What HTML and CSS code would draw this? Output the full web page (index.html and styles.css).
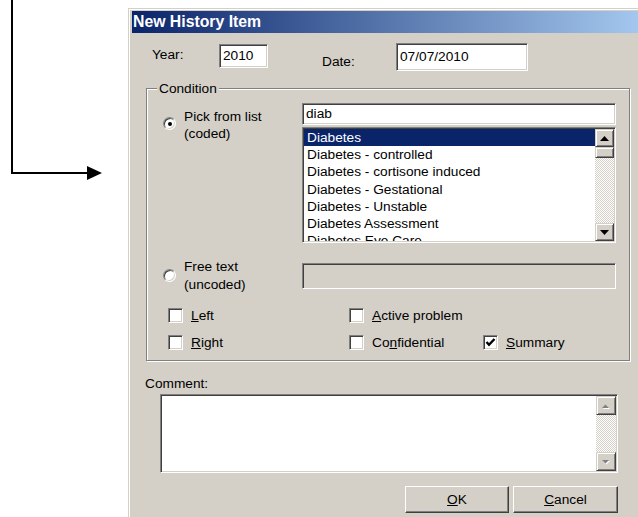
FILE: index.html
```html
<!DOCTYPE html>
<html>
<head>
<meta charset="utf-8">
<title>New History Item</title>
<link rel="stylesheet" href="styles.css">
</head>
<body>
<div class="scene">
  <svg class="pointer" viewBox="0 0 128 517" width="128" height="517">
    <path d="M12 0V173H88" stroke="#000" stroke-width="2" fill="none"/>
    <polygon points="87,166 102,173 87,180" fill="#000"/>
  </svg>

  <div class="window">
    <div class="titlebar">New History Item</div>

    <div class="top-row">
      <div class="lbl lbl-year">Year:</div>
      <div class="field in-year">2010</div>
      <div class="lbl lbl-date">Date:</div>
      <div class="field in-date">07/07/2010</div>
    </div>

    <div class="group">
      <span class="legend">Condition</span>

      <div class="opt-row">
        <div class="opt">
          <span class="radio checked"></span>
          <div class="opt-label">Pick from list<br>(coded)</div>
        </div>
        <div class="pick">
          <div class="field search">diab</div>
          <div class="field listbox">
            <div class="items">
              <div class="item sel">Diabetes</div>
              <div class="item">Diabetes - controlled</div>
              <div class="item">Diabetes - cortisone induced</div>
              <div class="item">Diabetes - Gestational</div>
              <div class="item">Diabetes - Unstable</div>
              <div class="item">Diabetes Assessment</div>
              <div class="item">Diabetes Eye Care</div>
            </div>
            <div class="vscroll">
              <div class="sbtn"><svg width="9" height="5" viewBox="0 0 9 5"><polygon points="0,5 9,5 4.5,0" fill="#000"/></svg></div>
              <div class="sbtn thumb"></div>
              <div class="track"></div>
              <div class="sbtn"><svg width="9" height="5" viewBox="0 0 9 5"><polygon points="0,0 9,0 4.5,5" fill="#000"/></svg></div>
            </div>
          </div>
        </div>
      </div>

      <div class="opt-row free">
        <div class="opt">
          <span class="radio"></span>
          <div class="opt-label">Free text<br>(uncoded)</div>
        </div>
        <div class="field free-text"></div>
      </div>

      <div class="checks">
        <div class="check"><span class="box"></span><u>L</u>eft</div>
        <div class="check"><span class="box"></span><u>A</u>ctive problem</div>
        <div class="check"></div>
        <div class="check"><span class="box"></span><u>R</u>ight</div>
        <div class="check"><span class="box"></span>Co<u>n</u>fidential</div>
        <div class="check"><span class="box"><svg width="13" height="13" viewBox="0 0 13 13"><polyline points="2.5,6 5,8.8 10.5,3" fill="none" stroke="#000" stroke-width="2.4"/></svg></span><u>S</u>ummary</div>
      </div>
    </div>

    <div class="lbl comment-lbl">Comment:</div>
    <div class="field comment">
      <div class="vscroll wide">
        <div class="sbtn tall"><svg width="10" height="6" viewBox="0 0 10 6"><polygon points="1,5 8,5 4.5,1.5" fill="#fff" transform="translate(1,1)"/><polygon points="1,5 8,5 4.5,1.5" fill="#808080"/></svg></div>
        <div class="track"></div>
        <div class="sbtn tall"><svg width="10" height="6" viewBox="0 0 10 6"><polygon points="1,1 8,1 4.5,4.5" fill="#fff" transform="translate(1,1)"/><polygon points="1,1 8,1 4.5,4.5" fill="#808080"/></svg></div>
      </div>
    </div>

    <div class="buttons">
      <div class="btn"><u>O</u>K</div>
      <div class="btn cancel"><u>C</u>ancel</div>
    </div>
  </div>
</div>
</body>
</html>
```

FILE: styles.css
```css
* { box-sizing: border-box; }

html, body { margin: 0; }

body {
  width: 638px;
  height: 517px;
  overflow: hidden;
  background: #fff;
  font-family: "Liberation Sans", Arial, sans-serif;
  font-size: 13.7px;
  color: #000;
}

.scene {
  display: flex;
  align-items: flex-start;
}

.pointer {
  flex: none;
  display: block;
}

/* classic dialog window */
.window {
  flex: none;
  width: 520px;
  height: 520px;
  margin-top: 8px;
  padding: 3px 0 0 4px;
  background: #D4D0C8;
  box-shadow: inset 1px 1px 0 #D4D0C8, inset 2px 2px 0 #fff;
}

.titlebar {
  height: 22px;
  padding-left: 1px;
  background: linear-gradient(90deg, #0A246A, #A6CAF0);
  color: #fff;
  font-weight: bold;
  font-size: 15.8px;
  line-height: 22px;
  white-space: nowrap;
}

.lbl { line-height: 16px; white-space: nowrap; }

/* sunken edit field */
.field {
  background: #fff;
  border: 1px solid;
  border-color: #808080 #fff #fff #808080;
  box-shadow: inset 1px 1px 0 #404040, inset -1px -1px 0 #D4D0C8;
  padding: 0 3px;
  white-space: nowrap;
  overflow: hidden;
}

.top-row {
  display: flex;
  align-items: flex-start;
  margin-top: 10px;
  padding-left: 20px;
}

.lbl-year { width: 67px; margin-top: 4px; }

.in-year {
  width: 49px;
  height: 24px;
  margin-top: 1px;
  line-height: 22px;
}

.lbl-date { width: 74px; margin: 11px 0 0 54px; }

.in-date {
  width: 132px;
  height: 28px;
  line-height: 26px;
}

/* etched group box */
.group {
  position: relative;
  width: 484px;
  height: 273px;
  margin: 17px 0 0 14px;
  padding: 14px 0 0 16px;
  border: 1px solid #808080;
  box-shadow: inset 1px 1px 0 #fff, 1px 1px 0 #fff;
}

.legend {
  position: absolute;
  top: -9px;
  left: 10px;
  padding: 0 2px;
  background: #D4D0C8;
  line-height: 17px;
}

.opt-row {
  display: flex;
  align-items: flex-start;
}

.opt {
  flex: none;
  width: 139px;
  display: flex;
  align-items: flex-start;
}

.radio {
  flex: none;
  position: relative;
  width: 13px;
  height: 13px;
  margin-top: 14px;
  border-radius: 50%;
  background: #fff;
  border: 1px solid;
  border-color: #808080 #fff #fff #808080;
  box-shadow: inset 1px 1px 0 #404040, inset -1px -1px 0 #D4D0C8;
}

.radio.checked::after {
  content: "";
  position: absolute;
  left: 3.5px;
  top: 3.5px;
  width: 4px;
  height: 4px;
  border-radius: 50%;
  background: #000;
}

.opt-label {
  margin: 5px 0 0 8px;
  line-height: 17px;
  white-space: nowrap;
}

.pick {
  width: 314px;
  display: flex;
  flex-direction: column;
}

.search { height: 22px; line-height: 20px; }

.listbox {
  display: flex;
  height: 116px;
  margin-top: 2px;
  padding: 1px;
}

.items {
  flex: 1;
  overflow: hidden;
}

.item {
  padding-left: 3px;
  line-height: 17.2px;
  white-space: nowrap;
}

.item.sel {
  background: #0A246A;
  color: #fff;
}

/* scroll bars */
.vscroll {
  flex: none;
  width: 19px;
  display: flex;
  flex-direction: column;
  background: repeating-conic-gradient(#fff 0 25%, #D4D0C8 0 50%) 0 0 / 2px 2px;
}

.vscroll.wide { width: 20px; }

.sbtn {
  flex: none;
  height: 18px;
  display: flex;
  align-items: center;
  justify-content: center;
  background: #D4D0C8;
  border: 1px solid;
  border-color: #D4D0C8 #404040 #404040 #D4D0C8;
  box-shadow: inset 1px 1px 0 #fff, inset -1px -1px 0 #808080;
}

.sbtn.tall { height: 19px; }
.sbtn.thumb { height: 11px; }
.track { flex: 1; }

.free { margin-top: 15px; }
.free .radio { margin-top: 11px; }
.free .opt-label { margin-top: 0; line-height: 18px; }

.free-text {
  width: 314px;
  height: 26px;
  margin-top: 5px;
  background: #D4D0C8;
}

.checks {
  display: grid;
  grid-template-columns: 181px 134px auto;
  row-gap: 12px;
  margin: 14px 0 0 5px;
}

.check {
  display: flex;
  align-items: center;
  height: 15px;
  white-space: nowrap;
}

.box {
  flex: none;
  width: 15px;
  height: 15px;
  margin-right: 8px;
  display: flex;
  align-items: center;
  justify-content: center;
  background: #fff;
  border: 1px solid;
  border-color: #808080 #fff #fff #808080;
  box-shadow: inset 1px 1px 0 #404040, inset -1px -1px 0 #D4D0C8;
}

.comment-lbl { margin: 15px 0 0 13px; }

.comment {
  display: flex;
  justify-content: flex-end;
  width: 458px;
  height: 79px;
  margin: 2px 0 0 28px;
  padding: 1px;
}

.buttons {
  display: flex;
  gap: 4px;
  margin: 13px 0 0 273px;
}

.btn {
  width: 104px;
  height: 27px;
  line-height: 25px;
  text-align: center;
  background: #D4D0C8;
  border: 1px solid;
  border-color: #fff #404040 #404040 #fff;
  box-shadow: inset -1px -1px 0 #808080;
}

.btn.cancel { width: 105px; }
```
